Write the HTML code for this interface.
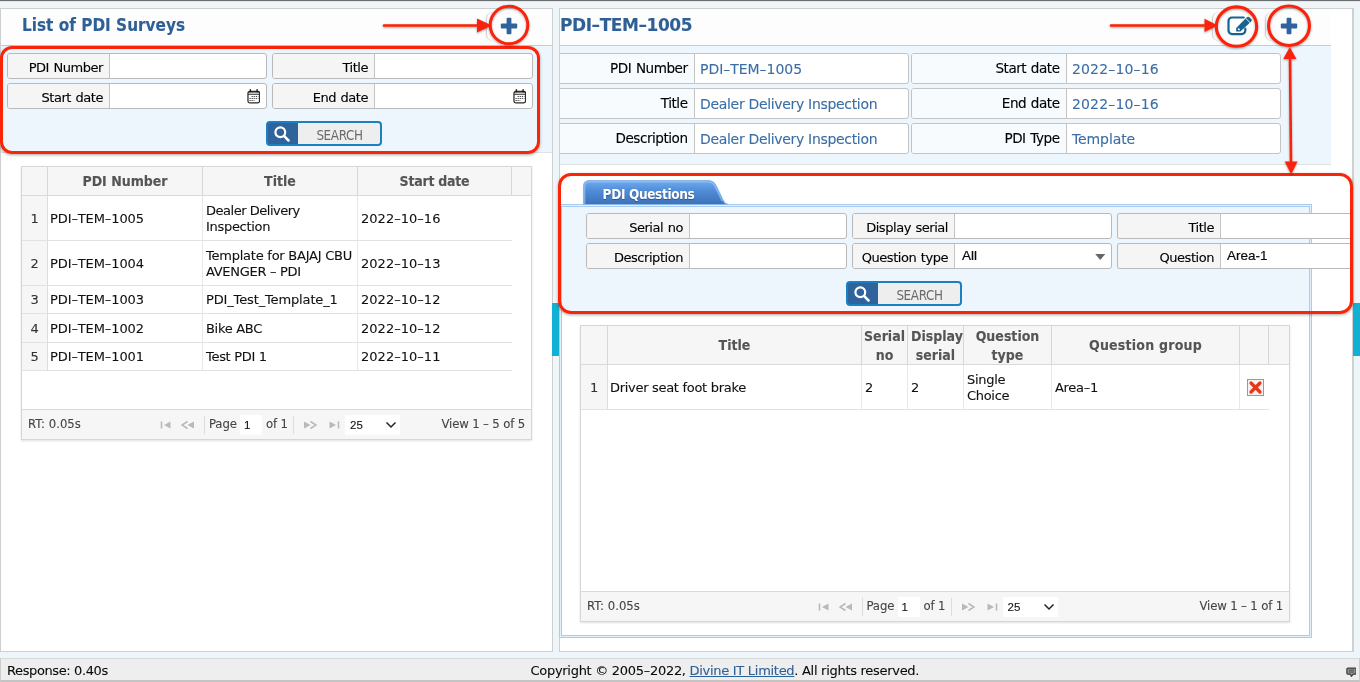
<!DOCTYPE html>
<html><head><meta charset="utf-8"><title>PDI Surveys</title>
<style>
*{box-sizing:border-box;margin:0;padding:0}
html,body{width:1360px;height:682px;overflow:hidden}
body{background:#eef6fa;font-family:"DejaVu Sans","Liberation Sans",sans-serif;font-size:13px;color:#0a0a0a;letter-spacing:-0.27px;position:relative;-webkit-text-stroke:0.1px}
#root{position:absolute;left:0;top:0;width:1360px;height:682px;will-change:transform}
.abs{position:absolute}
.b{font-family:"DejaVu Sans Condensed","DejaVu Sans","Liberation Sans",sans-serif;font-weight:700;letter-spacing:0}
.topline{left:0;top:0;width:1360px;height:2px;background:linear-gradient(#6c6c6c 0,#707070 1px,#d9e0e3 1px,#e6edf0 2px)}
.panel{background:#fff;border:1px solid #cfcfcf}
.hdr{background:#fdfdfd;border-bottom:1px solid #cbcbcb}
.ttl{color:#2e6095;font-size:17px;white-space:nowrap;line-height:20px;letter-spacing:0}
.sbg{background:#edf6fc}
.fld{position:absolute;height:26px;border:1px solid #b9b9b9;border-radius:3px;background:#fff;overflow:hidden}
.fld .l{position:absolute;left:0;top:0;bottom:0;background:#f5f5f5;border-right:1px solid #c4c4c4;text-align:right;padding-right:6px;line-height:28px;font-size:13px;white-space:nowrap;color:#000;letter-spacing:-0.45px;word-spacing:0.800px;-webkit-text-stroke:0.12px #000}
.fld .v{position:absolute;top:0;bottom:0;line-height:24px;white-space:nowrap}
.red{border:3px solid #fa2409;box-shadow:0 1px 3px rgba(0,0,0,.35)}

.cal{position:absolute;width:13.500px;height:14.800px}
.sbtn{position:absolute;width:116px;height:25px;border:2px solid #1a80c1;border-radius:4px;background:#2f639b;overflow:hidden}
.sbtn .si{position:absolute;left:-1px;top:0.500px;width:29px;height:21px;display:flex;align-items:center;justify-content:center}
.sbtn .st{position:absolute;left:30px;top:0;right:0;bottom:0;background:#eeeeee;color:#555;font-family:"DejaVu Sans Condensed","Liberation Sans",sans-serif;font-size:13.300px;letter-spacing:-0.35px;line-height:25px;text-align:center;color:#6a6a6a;-webkit-text-stroke:0;padding-left:1px}

.grid{position:absolute;border:1px solid #d6d6d6;background:#fff;box-shadow:0 1px 2px rgba(0,0,0,.12)}
.gh{position:absolute;left:0;top:0;right:0;background:#f6f6f6;border-bottom:1px solid #d9d9d9}
.gh div{position:absolute;top:0;bottom:0;border-right:1px solid #d6d6d6;text-align:center;color:#555;font-size:14px;display:flex;align-items:center;justify-content:center;line-height:19px;overflow:hidden}
.gh p{width:100%;text-align:center;position:relative;top:0.500px}
.gr p{white-space:nowrap}
.gr .d{letter-spacing:0.03px}
.gr .p{letter-spacing:-0.1px}
.gr{position:absolute;left:0;border-bottom:1px solid #e2e2e2}
.gr div{position:absolute;top:0;bottom:0;border-right:1px solid #e8e8e8;display:flex;align-items:center;padding-left:2px;padding-top:2px;line-height:16.500px;font-size:13px;color:#111;letter-spacing:-0.3px}
.gr .n{background:#f6f6f6;justify-content:center;padding:2px 0 0 0;color:#333;border-right:1px solid #ddd}
.pg{position:absolute;left:0;right:0;bottom:0;height:30px;background:#f6f6f6;border-top:1px solid #d9d9d9;color:#444;font-size:11.700px;letter-spacing:-0.15px}
.pg span{position:absolute;top:0;line-height:29px;white-space:nowrap}
.pg .sep{position:absolute;top:6px;width:1px;height:18px;background:#dcdcdc}
.pg .box{position:absolute;top:5px;height:20px;background:#fff;line-height:20px;color:#111;font-family:"Liberation Sans",sans-serif;font-size:11.500px;letter-spacing:0}

.vf{position:absolute;height:31px;border:1px solid #c4c4c4;border-radius:3px;background:#fff;overflow:hidden;font-size:14px}
.vf .l{position:absolute;left:0;top:0;bottom:0;background:#f7fbfe;border-right:1px solid #c4c4c4;text-align:right;padding-right:6.500px;line-height:29px;white-space:nowrap;color:#000;font-size:13.550px;letter-spacing:-0.47px;word-spacing:0.800px;-webkit-text-stroke:0.12px #000}
.vf .v{position:absolute;top:0;bottom:0;line-height:30.500px;white-space:nowrap;color:#3b6ea5;font-size:14px;letter-spacing:-0.1px}
</style></head>
<body><div id="root">
<svg width="0" height="0" style="position:absolute"><defs>
<filter id="sh" x="-20%" y="-20%" width="140%" height="140%"><feDropShadow dx="0" dy="1" stdDeviation="1" flood-color="#000" flood-opacity=".35"/></filter>
</defs></svg>
<div class="abs topline"></div>
<!-- LEFT PANEL -->
<div class="abs panel" style="left:0;top:8px;width:553px;height:644px"></div>
<div class="abs hdr" style="left:1px;top:9px;width:551px;height:37px"></div>
<div class="abs ttl b" style="left:22px;top:15px">List of PDI Surveys</div>
<div class="abs sbg" style="left:1px;top:46px;width:551px;height:107px;border-bottom:1px solid #dde3e7"></div>
<div class="abs" style="left:485.5px;top:12px;width:12px;height:29px;border-left:1px solid #d0d0d0;border-radius:7px 0 0 7px;box-shadow:-1px 0 1px rgba(0,0,0,.05)"></div><svg class="abs" style="left:499px;top:15.9px" width="20" height="20" viewBox="0 0 20 20"><rect x="7.600" y="1.800" width="4.800" height="16.400" rx="1" fill="#2f639b"/><rect x="1.800" y="7.600" width="16.400" height="4.800" rx="1" fill="#2f639b"/></svg>
<div class="fld" style="left:7px;top:53px;width:260px"><div class="l" style="width:102px">PDI Number</div></div>
<div class="fld" style="left:272px;top:53px;width:261px"><div class="l" style="width:102px">Title</div></div>
<div class="fld" style="left:7px;top:83px;width:260px"><div class="l" style="width:102px">Start date</div><svg class="cal" style="left:238.5px;top:5px" viewBox="0 0 14 15" preserveAspectRatio="none"><rect x="1" y="2.300" width="12" height="11.800" rx="2" fill="#fff" stroke="#2a2a2a" stroke-width="1.300"/><path d="M1 5.300h12" stroke="#2a2a2a" stroke-width="1.100"/><path d="M1.500 3.300h11" stroke="#2a2a2a" stroke-width="0.800"/><path d="M3.500 0.200v3M10.500 0.200v3" stroke="#1c1c1c" stroke-width="1.500"/><path d="M4.800 7.600h7M2.600 9.700h9.200M2.600 11.700h5" stroke="#3a3a3a" stroke-width="1.100" stroke-dasharray="1.200 0.950"/></svg></div>
<div class="fld" style="left:272px;top:83px;width:261px"><div class="l" style="width:102px">End date</div><svg class="cal" style="left:239.5px;top:5px" viewBox="0 0 14 15" preserveAspectRatio="none"><rect x="1" y="2.300" width="12" height="11.800" rx="2" fill="#fff" stroke="#2a2a2a" stroke-width="1.300"/><path d="M1 5.300h12" stroke="#2a2a2a" stroke-width="1.100"/><path d="M1.500 3.300h11" stroke="#2a2a2a" stroke-width="0.800"/><path d="M3.500 0.200v3M10.500 0.200v3" stroke="#1c1c1c" stroke-width="1.500"/><path d="M4.800 7.600h7M2.600 9.700h9.200M2.600 11.700h5" stroke="#3a3a3a" stroke-width="1.100" stroke-dasharray="1.200 0.950"/></svg></div>
<div class="sbtn" style="left:266px;top:121px"><div class="si"><svg width="16" height="16" viewBox="0 0 16 16"><circle cx="6.300" cy="6.300" r="4.900" fill="none" stroke="#fff" stroke-width="2.200"/><path d="M10.200 10.200l4.300 4.300" stroke="#fff" stroke-width="2.500" stroke-linecap="round"/></svg></div><div class="st">SEARCH</div></div>
<div class="abs red" style="left:0;top:46px;width:540px;height:108px;border-radius:12px"></div>
<div class="grid" style="left:21px;top:166px;width:511px;height:274px">
 <div class="gh" style="height:29px"><div class="b" style="left:0px;width:26px"><p></p></div><div class="b" style="left:26px;width:155px"><p>PDI Number</p></div><div class="b" style="left:181px;width:155px"><p>Title</p></div><div class="b" style="left:336px;width:154px"><p><span style="letter-spacing:-0.25px">Start date</span></p></div></div>
 <div class="gr" style="top:29px;height:45px;width:490px"><div class="n" style="left:0px;width:26px"><p>1</p></div><div style="left:26px;width:155px;padding-left:2px"><p><span class="p">PDI–TEM–1005</span></p></div><div style="left:181px;width:155px;padding-left:3px"><p><span style="letter-spacing:-0.48px">Dealer Delivery</span><br>Inspection</p></div><div style="left:336px;width:154px;padding-left:3px;border-right:0"><p><span class="d">2022–10–16</span></p></div></div>
 <div class="gr" style="top:74px;height:45px;width:490px"><div class="n" style="left:0px;width:26px"><p>2</p></div><div style="left:26px;width:155px;padding-left:2px"><p><span class="p">PDI–TEM–1004</span></p></div><div style="left:181px;width:155px;padding-left:3px"><p><span style="letter-spacing:-0.24px">Template for BAJAJ CBU</span><br>AVENGER – PDI</p></div><div style="left:336px;width:154px;padding-left:3px;border-right:0"><p><span class="d">2022–10–13</span></p></div></div>
 <div class="gr" style="top:119px;height:28px;width:490px"><div class="n" style="left:0px;width:26px"><p>3</p></div><div style="left:26px;width:155px;padding-left:2px"><p><span class="p">PDI–TEM–1003</span></p></div><div style="left:181px;width:155px;padding-left:3px"><p><span style="letter-spacing:-0.14px">PDI_Test_Template_1</span></p></div><div style="left:336px;width:154px;padding-left:3px;border-right:0"><p><span class="d">2022–10–12</span></p></div></div>
 <div class="gr" style="top:147px;height:29px;width:490px"><div class="n" style="left:0px;width:26px"><p>4</p></div><div style="left:26px;width:155px;padding-left:2px"><p><span class="p">PDI–TEM–1002</span></p></div><div style="left:181px;width:155px;padding-left:3px"><p>Bike ABC</p></div><div style="left:336px;width:154px;padding-left:3px;border-right:0"><p><span class="d">2022–10–12</span></p></div></div>
 <div class="gr" style="top:176px;height:28px;width:490px"><div class="n" style="left:0px;width:26px"><p>5</p></div><div style="left:26px;width:155px;padding-left:2px"><p><span class="p">PDI–TEM–1001</span></p></div><div style="left:181px;width:155px;padding-left:3px"><p>Test PDI 1</p></div><div style="left:336px;width:154px;padding-left:3px;border-right:0"><p><span class="d">2022–10–11</span></p></div></div>
<div class="pg"><span style="left:6px;letter-spacing:0">RT: 0.05s</span>
  <svg class="abs" style="left:138px;top:10px" width="12" height="10" viewBox="0 0 12 10"><path d="M1.500 1.500v7" stroke="#b9b9b9" stroke-width="1.600"/><path d="M10.500 1.500v7l-6.500-3.500z" fill="#b9b9b9"/></svg>
  <svg class="abs" style="left:159px;top:10px" width="14" height="10" viewBox="0 0 14 10"><path d="M6.500 1.500l-5.500 3.500 5.500 3.500" fill="none" stroke="#b9b9b9" stroke-width="1.500"/><path d="M13 1.500v7l-6.500-3.500z" fill="#b9b9b9"/></svg>
  <i class="sep" style="left:182px"></i><span style="left:187px">Page</span><div class="box" style="left:218px;width:22px;padding-left:4px">1</div><span style="left:244px">of 1</span><i class="sep" style="left:271px"></i>
  <svg class="abs" style="left:281px;top:10px" width="14" height="10" viewBox="0 0 14 10"><path d="M7.500 1.500l5.500 3.500-5.500 3.500" fill="none" stroke="#b9b9b9" stroke-width="1.500"/><path d="M1 1.500v7l6.500-3.500z" fill="#b9b9b9"/></svg>
  <svg class="abs" style="left:306px;top:10px" width="12" height="10" viewBox="0 0 12 10"><path d="M10.500 1.500v7" stroke="#b9b9b9" stroke-width="1.600"/><path d="M1.500 1.500v7l6.500-3.500z" fill="#b9b9b9"/></svg>
  <div class="box" style="left:323px;width:55px;padding-left:5px">25<svg class="abs" style="left:40px;top:6px" width="12" height="8" viewBox="0 0 12 8"><path d="M1.500 1.500l4.500 4.500 4.500-4.500" fill="none" stroke="#222" stroke-width="1.500"/></svg></div>
  <span style="right:6px">View 1 – 5 of 5</span></div>
</div>

<svg class="abs" style="left:370px;top:0" width="180" height="52" viewBox="370 0 180 52"><g filter="url(#sh)"><path d="M384 25.500H480" stroke="#fa2409" stroke-width="2.600" stroke-linecap="round"/><path d="M477 18.500L492 25.500L477 32.500z" fill="#fa2409"/><circle cx="509" cy="25" r="18.800" fill="none" stroke="#fa2409" stroke-width="3"/></g></svg>

<!-- RIGHT PANEL -->
<div class="abs panel" style="left:559px;top:8px;width:795px;height:644px;border-right:2px solid #d0d0d0"></div>
<div class="abs hdr" style="left:560px;top:9px;width:771px;height:37px"></div>
<div class="abs ttl b" style="left:560px;top:15px;font-family:'DejaVu Sans',sans-serif;letter-spacing:-0.44px">PDI–TEM–1005</div>
<div class="abs sbg" style="left:560px;top:46px;width:771px;height:119px;overflow:hidden;border-bottom:1px solid #dde3e7">
<div class="vf" style="left:-6px;top:7px;width:355px"><div class="l" style="width:140px">PDI Number</div><div class="v" style="left:145px;letter-spacing:-0.03px">PDI–TEM–1005</div></div>
<div class="vf" style="left:-6px;top:42px;width:355px"><div class="l" style="width:140px">Title</div><div class="v" style="left:145px;letter-spacing:-0.32px">Dealer Delivery Inspection</div></div>
<div class="vf" style="left:-6px;top:77px;width:355px"><div class="l" style="width:140px">Description</div><div class="v" style="left:145px;letter-spacing:-0.32px">Dealer Delivery Inspection</div></div>
<div class="vf" style="left:351px;top:7px;width:370px"><div class="l" style="width:155px">Start date</div><div class="v" style="left:160px;letter-spacing:0.15px">2022–10–16</div></div>
<div class="vf" style="left:351px;top:42px;width:370px"><div class="l" style="width:155px">End date</div><div class="v" style="left:160px;letter-spacing:0.15px">2022–10–16</div></div>
<div class="vf" style="left:351px;top:77px;width:370px"><div class="l" style="width:155px">PDI Type</div><div class="v" style="left:160px">Template</div></div>
</div>
<div class="abs" style="left:1212px;top:12px;width:12px;height:29px;border-left:1px solid #d0d0d0;border-radius:7px 0 0 7px;box-shadow:-1px 0 1px rgba(0,0,0,.05)"></div><div class="abs" style="left:1265px;top:12px;width:12px;height:29px;border-left:1px solid #d0d0d0;border-radius:7px 0 0 7px;box-shadow:-1px 0 1px rgba(0,0,0,.05)"></div>
<svg class="abs" style="left:1224px;top:12px" width="32" height="28" viewBox="1224 12 32 28"><path d="M1243.700 17.500H1232a3.500 3.500 0 0 0-3.500 3.500v9.600a3.500 3.500 0 0 0 3.500 3.500h9.800a3.500 3.500 0 0 0 3.500-3.500v-1.900" fill="none" stroke="#17648c" stroke-width="2.200" stroke-linecap="round"/><path d="M1236.200 31.600V28L1246.600 17.400Q1248 16 1249.300 17.200L1251.300 19.200Q1252.400 20.400 1251.200 21.600L1240.400 31.600Z" fill="#17648c"/><path d="M1245.900 18.500l4.200 4.200" stroke="#fff" stroke-width="0.900"/><path d="M1237.700 29l1-1 1.400 1.400-1 1z" fill="#fff"/></svg>
<svg class="abs" style="left:1278.9px;top:15.6px" width="20" height="20" viewBox="0 0 20 20"><rect x="7.600" y="1.800" width="4.800" height="16.400" rx="1" fill="#2f639b"/><rect x="1.800" y="7.600" width="16.400" height="4.800" rx="1" fill="#2f639b"/></svg>
<!-- tab panel -->
<div class="abs" style="left:559px;top:204px;width:753px;height:434px;border:1px solid #a9cbef;background:#e3effb"></div>
<div class="abs" style="left:561px;top:206px;width:749px;height:430px;border:1px solid #a9cbef;background:#fff"></div>
<div class="abs sbg" style="left:562px;top:207px;width:747px;height:105px"></div>
<svg class="abs" style="left:580px;top:176px" width="150" height="30" viewBox="0 0 150 30"><defs><linearGradient id="tg" x1="0" y1="0" x2="0" y2="1"><stop offset="0" stop-color="#6fabf0"/><stop offset="0.450" stop-color="#4f8bd6"/><stop offset="1" stop-color="#3d72b8"/></linearGradient></defs><path d="M3.500 28.500V10a5.500 5.500 0 0 1 5.500-5.500H127.500Q133.500 4.500 136 9.500L143.200 24.500Q145 28 148 28.500z" fill="url(#tg)" stroke="#8ab6ea" stroke-width="1.200"/><path d="M4.800 28V10.200a4.300 4.300 0 0 1 4.300-4.300H127.300Q132.500 5.900 134.800 10.200L142 25" fill="none" stroke="#a9d0f8" stroke-width="0.900" opacity="0.850"/><text x="22.600" y="22.700" font-family="DejaVu Sans Condensed, DejaVu Sans, sans-serif" font-weight="700" font-size="13.500" letter-spacing="-0.350" fill="#fff" style="text-shadow:0 1px 1px rgba(0,0,40,.35)">PDI Questions</text></svg>
<div class="fld" style="left:586px;top:213px;width:261px"><div class="l" style="width:103px">Serial no</div></div>
<div class="fld" style="left:852px;top:213px;width:260px"><div class="l" style="width:102px">Display serial</div></div>
<div class="fld" style="left:1117px;top:213px;width:233px;border-right:0;border-radius:3px 0 0 3px"><div class="l" style="width:103px">Title</div></div>
<div class="fld" style="left:586px;top:243px;width:261px"><div class="l" style="width:103px">Description</div></div>
<div class="fld" style="left:852px;top:243px;width:260px"><div class="l" style="width:102px">Question type</div><div class="v" style="left:109px;font-family:Liberation Sans,sans-serif;letter-spacing:0;font-size:13.500px;-webkit-text-stroke:0.2px">All</div><svg class="abs" style="left:242px;top:9.500px" width="10.500" height="6" viewBox="0 0 10 6"><path d="M0 0h10l-5 6z" fill="#666"/></svg></div>
<div class="fld" style="left:1117px;top:243px;width:233px;border-right:0;border-radius:3px 0 0 3px"><div class="l" style="width:103px">Question</div><div class="v" style="left:109px;font-family:Liberation Sans,sans-serif;letter-spacing:0;font-size:13.500px;-webkit-text-stroke:0.2px">Area-1</div></div>
<div class="sbtn" style="left:846px;top:281px"><div class="si"><svg width="16" height="16" viewBox="0 0 16 16"><circle cx="6.300" cy="6.300" r="4.900" fill="none" stroke="#fff" stroke-width="2.200"/><path d="M10.200 10.200l4.300 4.300" stroke="#fff" stroke-width="2.500" stroke-linecap="round"/></svg></div><div class="st">SEARCH</div></div>
<div class="grid" style="left:580px;top:325px;width:710px;height:297px">
 <div class="gh" style="height:39px"><div class="b" style="left:0px;width:27px"><p></p></div><div class="b" style="left:27px;width:254px"><p>Title</p></div><div class="b" style="left:281px;width:46px"><p>Serial<br>no</p></div><div class="b" style="left:327px;width:56px"><p><span style="white-space:nowrap;display:block;width:56px;overflow:hidden;text-align:left;padding-left:3px">Display</span>serial</p></div><div class="b" style="left:383px;width:88px"><p>Question<br>type</p></div><div class="b" style="left:471px;width:188px"><p><span style="letter-spacing:0.22px">Question group</span></p></div><div class="b" style="left:659px;width:29px"><p></p></div></div>
 <div class="gr" style="top:39px;height:45px;width:688px"><div class="n" style="left:0px;width:27px"><p>1</p></div><div style="left:27px;width:254px;padding-left:2px"><p>Driver seat foot brake</p></div><div style="left:281px;width:46px;padding-left:3px"><p>2</p></div><div style="left:327px;width:56px;padding-left:3px"><p>2</p></div><div style="left:383px;width:88px;padding-left:3px"><p>Single<br>Choice</p></div><div style="left:471px;width:188px;padding-left:3px"><p>Area–1</p></div><div style="left:659px;width:29px;padding-left:0px;border-right:0"><p></p></div></div>
<div class="abs" style="left:666px;top:53px;width:17px;height:17px;border:1px solid #9a9a9a;background:#f2f2f2"><svg width="15" height="15" viewBox="0 0 15 15" style="display:block"><path d="M3 3l9 9M12 3l-9 9" stroke="#e2391c" stroke-width="3.300" stroke-linecap="round"/></svg></div><div class="pg"><span style="left:6px;letter-spacing:0">RT: 0.05s</span>
  <svg class="abs" style="left:236.5px;top:10px" width="12" height="10" viewBox="0 0 12 10"><path d="M1.500 1.500v7" stroke="#b9b9b9" stroke-width="1.600"/><path d="M10.500 1.500v7l-6.500-3.500z" fill="#b9b9b9"/></svg>
  <svg class="abs" style="left:257.5px;top:10px" width="14" height="10" viewBox="0 0 14 10"><path d="M6.500 1.500l-5.500 3.500 5.500 3.500" fill="none" stroke="#b9b9b9" stroke-width="1.500"/><path d="M13 1.500v7l-6.500-3.500z" fill="#b9b9b9"/></svg>
  <i class="sep" style="left:280.5px"></i><span style="left:285.5px">Page</span><div class="box" style="left:316.5px;width:22px;padding-left:4px">1</div><span style="left:342.5px">of 1</span><i class="sep" style="left:369.5px"></i>
  <svg class="abs" style="left:379.5px;top:10px" width="14" height="10" viewBox="0 0 14 10"><path d="M7.500 1.500l5.500 3.500-5.500 3.500" fill="none" stroke="#b9b9b9" stroke-width="1.500"/><path d="M1 1.500v7l6.500-3.500z" fill="#b9b9b9"/></svg>
  <svg class="abs" style="left:404.5px;top:10px" width="12" height="10" viewBox="0 0 12 10"><path d="M10.500 1.500v7" stroke="#b9b9b9" stroke-width="1.600"/><path d="M1.500 1.500v7l6.500-3.500z" fill="#b9b9b9"/></svg>
  <div class="box" style="left:421.5px;width:55px;padding-left:5px">25<svg class="abs" style="left:40px;top:6px" width="12" height="8" viewBox="0 0 12 8"><path d="M1.500 1.500l4.500 4.500 4.500-4.500" fill="none" stroke="#222" stroke-width="1.500"/></svg></div>
  <span style="right:6px">View 1 – 1 of 1</span></div>
</div>

<div class="abs" style="left:552px;top:303px;width:7px;height:53px;background:#12b0d2"></div>
<div class="abs" style="left:1353px;top:303px;width:7px;height:53px;background:#12b0d2"></div>
<div class="abs red" style="left:557.500px;top:173px;width:795px;height:140.500px;border-radius:13px"></div>
<svg class="abs" style="left:1100px;top:0" width="260" height="180" viewBox="1100 0 260 180"><g filter="url(#sh)"><path d="M1111 25.500H1207" stroke="#fa2409" stroke-width="2.600" stroke-linecap="round"/><path d="M1204.500 18.800L1218 25.400L1204.500 32z" fill="#fa2409"/><ellipse cx="1236.500" cy="26.600" rx="20.200" ry="19.700" fill="none" stroke="#fa2409" stroke-width="3.100"/><ellipse cx="1289" cy="25.700" rx="20.450" ry="19.750" fill="none" stroke="#fa2409" stroke-width="3.100"/><path d="M1290 58L1291 163" stroke="#fa2409" stroke-width="2.600"/><path d="M1283.200 59L1289.800 47L1296.500 59z" fill="#fa2409"/><path d="M1284.700 161.500L1291.200 174.500L1297.500 161.500z" fill="#fa2409"/></g></svg>

<!-- FOOTER -->
<div class="abs" style="left:0;top:658px;width:1360px;height:24px;background:#eeeeee;border:1px solid #cdcdcd;border-top-color:#d6dadb;border-bottom:2px solid #c4c4c4"></div>
<svg class="abs" style="left:1345.500px;top:666.500px" width="10.800" height="10.800" viewBox="0 0 12 12"><path d="M2.300 1.200h7.600a1.300 1.300 0 0 1 1.300 1.300v4.200a1.300 1.300 0 0 1-1.300 1.300H8L6 10.300 4.800 8H2.300A1.300 1.300 0 0 1 1 6.700V2.500a1.300 1.300 0 0 1 1.300-1.300z" fill="#9c9c9c" stroke="#3c3c3c" stroke-width="1.400" stroke-linejoin="round"/><path d="M3 3.500h6.200M3 5.600h6.200" stroke="#3c3c3c" stroke-width="1"/></svg>
<div class="abs" style="left:7px;top:663px;line-height:16px;letter-spacing:-0.39px">Response: 0.40s</div>
<div class="abs" style="left:530.500px;top:663px;line-height:16px;white-space:nowrap;letter-spacing:-0.29px">Copyright © 2005–2022, <span style="color:#2e6095;text-decoration:underline">Divine IT Limited</span>. All rights reserved.</div>
</div></body></html>
